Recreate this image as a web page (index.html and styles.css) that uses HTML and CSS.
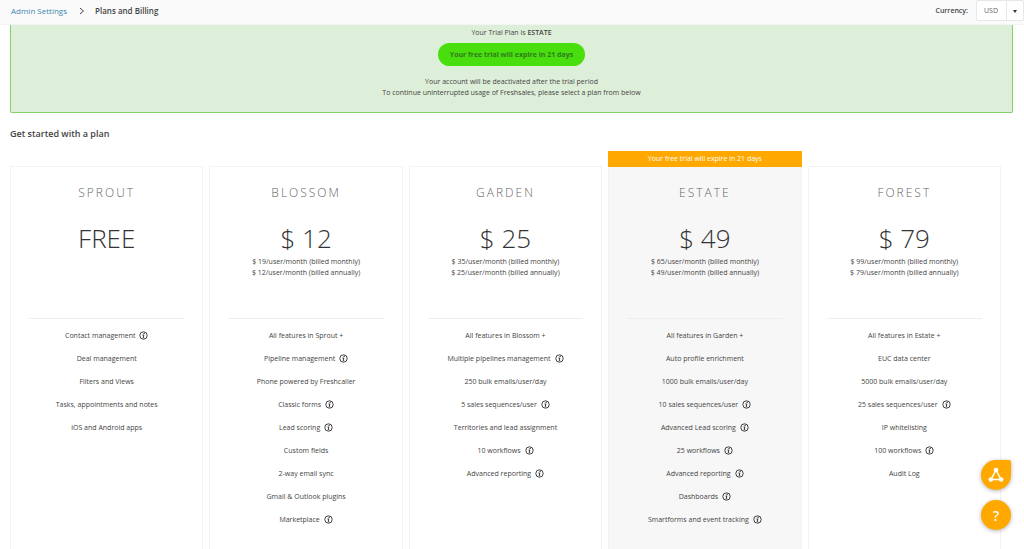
FILE: index.html
```
<!DOCTYPE html>
<html lang="en">
<head>
    <meta charset="UTF-8">
    <meta name="viewport" content="width=device-width, initial-scale=1.0">
    <title>Plans and Billing</title>
    <link rel="stylesheet" href="styles.css">
</head>
<body>
    <svg width="0" height="0" class="sprite" aria-hidden="true">
        <symbol id="info" viewBox="0 0 18 18">
            <circle cx="9" cy="9" r="7.4" fill="none" stroke="currentColor" stroke-width="1.7"/>
            <path d="M7 8h2.6L8.4 13.4h2" fill="none" stroke="currentColor" stroke-width="1.8"/>
            <circle cx="10.2" cy="5" r="1.3" fill="currentColor"/>
        </symbol>
    </svg>
    <header class="topbar">
        <nav class="breadcrumb" aria-label="Breadcrumb">
            <a href="#">Admin Settings</a>
            <svg class="chevron" viewBox="0 0 6 8" aria-hidden="true"><path d="M1 1l3.5 3L1 7" fill="none" stroke="currentColor"/></svg>
            <h1>Plans and Billing</h1>
        </nav>
        <div class="currency">
            <label for="currency">Currency:</label>
            <div class="select-box">
                <select id="currency">
                    <option>USD</option>
                    <option>EUR</option>
                    <option>GBP</option>
                </select>
                <span class="caret"></span>
            </div>
        </div>
    </header>
    <main>
        <section class="trial">
            <p>Your Trial Plan is <strong>ESTATE</strong></p>
            <div class="pill">Your free trial will expire in 21 days</div>
            <p>Your account will be deactivated after the trial period</p>
            <p>To continue uninterrupted usage of Freshsales, please select a plan from below</p>
        </section>
        <h2>Get started with a plan</h2>
        <div class="plans">
            <section class="plan">
                <h3>SPROUT</h3>
                <div class="price">FREE</div>
                <div class="rates"></div>
                <ul>
                    <li>Contact management <svg class="info"><use href="#info"/></svg></li>
                    <li>Deal management</li>
                    <li>Filters and Views</li>
                    <li>Tasks, appointments and notes</li>
                    <li>iOS and Android apps</li>
                </ul>
            </section>
            <section class="plan">
                <h3>BLOSSOM</h3>
                <div class="price">$ 12</div>
                <div class="rates">
                    <p>$ 19/user/month (billed monthly)</p>
                    <p>$ 12/user/month (billed annually)</p>
                </div>
                <ul>
                    <li>All features in Sprout +</li>
                    <li>Pipeline management <svg class="info"><use href="#info"/></svg></li>
                    <li>Phone powered by Freshcaller</li>
                    <li>Classic forms <svg class="info"><use href="#info"/></svg></li>
                    <li>Lead scoring <svg class="info"><use href="#info"/></svg></li>
                    <li>Custom fields</li>
                    <li>2-way email sync</li>
                    <li>Gmail &amp; Outlook plugins</li>
                    <li>Marketplace <svg class="info"><use href="#info"/></svg></li>
                </ul>
            </section>
            <section class="plan">
                <h3>GARDEN</h3>
                <div class="price">$ 25</div>
                <div class="rates">
                    <p>$ 35/user/month (billed monthly)</p>
                    <p>$ 25/user/month (billed annually)</p>
                </div>
                <ul>
                    <li>All features in Blossom +</li>
                    <li>Multiple pipelines management <svg class="info"><use href="#info"/></svg></li>
                    <li>250 bulk emails/user/day</li>
                    <li>5 sales sequences/user <svg class="info"><use href="#info"/></svg></li>
                    <li>Territories and lead assignment</li>
                    <li>10 workflows <svg class="info"><use href="#info"/></svg></li>
                    <li>Advanced reporting <svg class="info"><use href="#info"/></svg></li>
                </ul>
            </section>
            <section class="plan current">
                <div class="flag">Your free trial will expire in 21 days</div>
                <h3>ESTATE</h3>
                <div class="price">$ 49</div>
                <div class="rates">
                    <p>$ 65/user/month (billed monthly)</p>
                    <p>$ 49/user/month (billed annually)</p>
                </div>
                <ul>
                    <li>All features in Garden +</li>
                    <li>Auto profile enrichment</li>
                    <li>1000 bulk emails/user/day</li>
                    <li>10 sales sequences/user <svg class="info"><use href="#info"/></svg></li>
                    <li>Advanced Lead scoring <svg class="info"><use href="#info"/></svg></li>
                    <li>25 workflows <svg class="info"><use href="#info"/></svg></li>
                    <li>Advanced reporting <svg class="info"><use href="#info"/></svg></li>
                    <li>Dashboards <svg class="info"><use href="#info"/></svg></li>
                    <li>Smartforms and event tracking <svg class="info"><use href="#info"/></svg></li>
                </ul>
            </section>
            <section class="plan">
                <h3>FOREST</h3>
                <div class="price">$ 79</div>
                <div class="rates">
                    <p>$ 99/user/month (billed monthly)</p>
                    <p>$ 79/user/month (billed annually)</p>
                </div>
                <ul>
                    <li>All features in Estate +</li>
                    <li>EUC data center</li>
                    <li>5000 bulk emails/user/day</li>
                    <li>25 sales sequences/user <svg class="info"><use href="#info"/></svg></li>
                    <li>IP whitelisting</li>
                    <li>100 workflows <svg class="info"><use href="#info"/></svg></li>
                    <li>Audit Log</li>
                </ul>
            </section>
        </div>
    </main>
    <div class="helpers">
        <button class="fab network" aria-label="Freshworks apps">
            <svg viewBox="0 0 16 16" aria-hidden="true">
                <path d="M8 3L3 12.5h10z" fill="none" stroke="#fff" stroke-width="1.5"/>
                <circle cx="8" cy="3" r="2.3" fill="#fff"/>
                <circle cx="2.8" cy="12.5" r="2.3" fill="#fff"/>
                <circle cx="13.2" cy="12.5" r="2.3" fill="#fff"/>
            </svg>
        </button>
        <button class="fab">?</button>
    </div>
</body>
</html>
```
FILE: styles.css
```
* {
  box-sizing: border-box;
}
body {
  margin: 0;
  height: 100vh;
  display: flex;
  flex-direction: column;
  overflow: hidden;
  background: #fff;
  color: #444;
  font-family: "Open Sans", "Segoe UI", sans-serif;
  font-size: 7px;
  line-height: 11px;
}
h1, h2, h3, p, ul {
  margin: 0;
  padding: 0;
}
.sprite {
  position: absolute;
}
.topbar {
  display: flex;
  justify-content: space-between;
  align-items: center;
  flex: none;
  height: 25px;
  padding: 0 0 3px 11px;
  background: #fafafa;
  border-bottom: 1px solid #f3f3f3;
}
.breadcrumb {
  display: flex;
  align-items: center;
  font-size: 8px;
}
.breadcrumb a {
  color: #3d87b0;
  text-decoration: none;
}
.chevron {
  width: 6px;
  height: 8px;
  margin: 0 10px 0 12px;
}
.breadcrumb h1 {
  font-size: 8px;
  font-weight: 600;
}
.currency {
  display: flex;
  align-items: center;
  gap: 8px;
}
.currency label {
  font-weight: 600;
}
.select-box {
  display: flex;
  align-items: center;
  height: 21px;
  background: #fff;
  border: 1px solid #e8e8e8;
  border-radius: 2px;
}
.select-box select {
  appearance: none;
  width: 30px;
  height: 19px;
  padding: 0 7px;
  border: 0;
  border-right: 1px solid #e8e8e8;
  background: none;
  color: #666;
  font: inherit;
}
.caret {
  margin: 2px 6px 0;
  border: 2px solid transparent;
  border-top: 3px solid #333;
  border-bottom: 0;
}
main {
  flex: 1;
  min-height: 0;
  display: flex;
  flex-direction: column;
  padding: 0 11px 0 10px;
}
.trial {
  flex: none;
  padding: 2px 0 14px;
  background: #deefd9;
  border: 1px solid #86d06c;
  border-top: 0;
  border-radius: 0 0 2px 2px;
  text-align: center;
}
.trial strong {
  font-weight: 600;
}
.pill {
  width: fit-content;
  margin: 5px auto 10px;
  padding: 0 12px;
  border-radius: 12px;
  background: #49de0e;
  color: #2f7d1c;
  font-weight: 700;
  line-height: 23px;
}
h2 {
  flex: none;
  margin: 15px 0 26px;
  font-size: 9px;
  font-weight: 600;
  line-height: 12px;
}
.plans {
  flex: 1;
  min-height: 0;
  display: grid;
  grid-template-columns: repeat(5, 1fr);
  gap: 6px;
  padding-right: 12px;
}
.plan {
  position: relative;
  padding: 18px 18px 0;
  border: 1px solid #f3f3f3;
  border-bottom: 0;
  text-align: center;
}
.current {
  background: #f7f7f7;
}
.flag {
  position: absolute;
  left: -1px;
  right: -1px;
  bottom: 100%;
  background: #ffa800;
  color: #fff;
  line-height: 16px;
}
.plan h3 {
  color: #666;
  font-size: 12px;
  font-weight: 300;
  line-height: 16px;
  letter-spacing: 2px;
}
.price {
  margin-top: 20px;
  color: #333;
  font-size: 26px;
  font-weight: 300;
  line-height: 35px;
}
.rates {
  height: 63px;
  border-bottom: 1px solid #eee;
}
.plan ul {
  margin: 11px 0 0;
  list-style: none;
}
.plan li {
  display: flex;
  justify-content: center;
  align-items: center;
  gap: 4px;
  height: 11px;
  margin-bottom: 12px;
  white-space: nowrap;
}
.info {
  width: 9px;
  height: 9px;
  color: #222;
}
.helpers {
  position: fixed;
  right: 13px;
  bottom: 19px;
  display: flex;
  flex-direction: column;
  gap: 10px;
}
.fab {
  display: flex;
  justify-content: center;
  align-items: center;
  width: 30px;
  height: 30px;
  padding: 0;
  border: 0;
  border-radius: 50%;
  background: #ffa800;
  box-shadow: 0 1px 4px rgba(0, 0, 0, 0.3);
  color: #fff;
  font: 600 14px "Open Sans", sans-serif;
}
.network {
  border-top-right-radius: 2px;
}
.fab svg {
  width: 16px;
  height: 16px;
}
```
